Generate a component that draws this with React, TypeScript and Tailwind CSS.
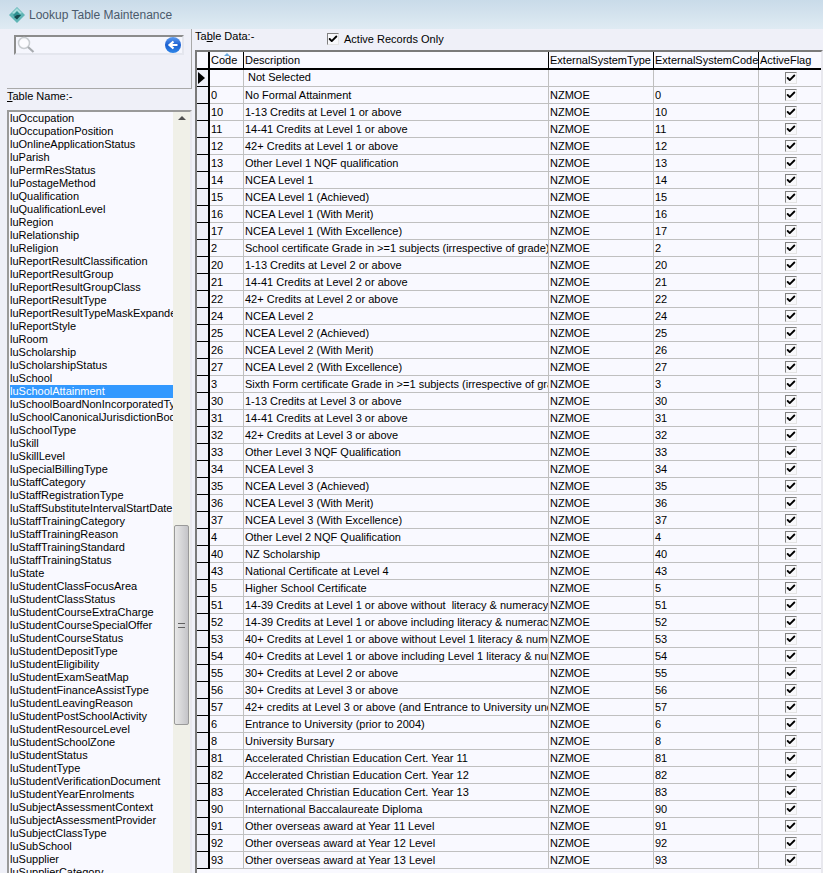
import { Check } from 'lucide-react';

const tableNames = [
  'luOccupation', 'luOccupationPosition', 'luOnlineApplicationStatus', 'luParish', 'luPermResStatus',
  'luPostageMethod', 'luQualification', 'luQualificationLevel', 'luRegion', 'luRelationship', 'luReligion',
  'luReportResultClassification', 'luReportResultGroup', 'luReportResultGroupClass', 'luReportResultType',
  'luReportResultTypeMaskExpanded', 'luReportStyle', 'luRoom', 'luScholarship', 'luScholarshipStatus', 'luSchool',
  'luSchoolAttainment', 'luSchoolBoardNonIncorporatedType', 'luSchoolCanonicalJurisdictionBody', 'luSchoolType',
  'luSkill', 'luSkillLevel', 'luSpecialBillingType', 'luStaffCategory', 'luStaffRegistrationType',
  'luStaffSubstituteIntervalStartDate', 'luStaffTrainingCategory', 'luStaffTrainingReason', 'luStaffTrainingStandard',
  'luStaffTrainingStatus', 'luState', 'luStudentClassFocusArea', 'luStudentClassStatus', 'luStudentCourseExtraCharge',
  'luStudentCourseSpecialOffer', 'luStudentCourseStatus', 'luStudentDepositType', 'luStudentEligibility',
  'luStudentExamSeatMap', 'luStudentFinanceAssistType', 'luStudentLeavingReason', 'luStudentPostSchoolActivity',
  'luStudentResourceLevel', 'luStudentSchoolZone', 'luStudentStatus', 'luStudentType', 'luStudentVerificationDocument',
  'luStudentYearEnrolments', 'luSubjectAssessmentContext', 'luSubjectAssessmentProvider', 'luSubjectClassType',
  'luSubSchool', 'luSupplier', 'luSupplierCategory',
];

const rows: [string, string][] = [
  ['0', 'No Formal Attainment'],
  ['10', '1-13 Credits at Level 1 or above'],
  ['11', '14-41 Credits at Level 1 or above'],
  ['12', '42+ Credits at Level 1 or above'],
  ['13', 'Other Level 1 NQF qualification'],
  ['14', 'NCEA Level 1'],
  ['15', 'NCEA Level 1 (Achieved)'],
  ['16', 'NCEA Level 1 (With Merit)'],
  ['17', 'NCEA Level 1 (With Excellence)'],
  ['2', 'School certificate Grade in >=1 subjects (irrespective of grade)'],
  ['20', '1-13 Credits at Level 2 or above'],
  ['21', '14-41 Credits at Level 2 or above'],
  ['22', '42+ Credits at Level 2 or above'],
  ['24', 'NCEA Level 2'],
  ['25', 'NCEA Level 2 (Achieved)'],
  ['26', 'NCEA Level 2 (With Merit)'],
  ['27', 'NCEA Level 2 (With Excellence)'],
  ['3', 'Sixth Form certificate Grade in >=1 subjects (irrespective of grade)'],
  ['30', '1-13 Credits at Level 3 or above'],
  ['31', '14-41 Credits at Level 3 or above'],
  ['32', '42+ Credits at Level 3 or above'],
  ['33', 'Other Level 3 NQF Qualification'],
  ['34', 'NCEA Level 3'],
  ['35', 'NCEA Level 3 (Achieved)'],
  ['36', 'NCEA Level 3 (With Merit)'],
  ['37', 'NCEA Level 3 (With Excellence)'],
  ['4', 'Other Level 2 NQF Qualification'],
  ['40', 'NZ Scholarship'],
  ['43', 'National Certificate at Level 4'],
  ['5', 'Higher School Certificate'],
  ['51', '14-39 Credits at Level 1 or above without  literacy & numeracy'],
  ['52', '14-39 Credits at Level 1 or above including literacy & numeracy'],
  ['53', '40+ Credits at Level 1 or above without Level 1 literacy & numeracy'],
  ['54', '40+ Credits at Level 1 or above including Level 1 literacy & numeracy'],
  ['55', '30+ Credits at Level 2 or above'],
  ['56', '30+ Credits at Level 3 or above'],
  ['57', '42+ credits at Level 3 or above (and Entrance to University under'],
  ['6', 'Entrance to University (prior to 2004)'],
  ['8', 'University Bursary'],
  ['81', 'Accelerated Christian Education Cert. Year 11'],
  ['82', 'Accelerated Christian Education Cert. Year 12'],
  ['83', 'Accelerated Christian Education Cert. Year 13'],
  ['90', 'International Baccalaureate Diploma'],
  ['91', 'Other overseas award at Year 11 Level'],
  ['92', 'Other overseas award at Year 12 Level'],
  ['93', 'Other overseas award at Year 13 Level'],
];

function CheckBox() {
  return (
    <div className="w-[12px] h-[12px] flex items-center justify-center border border-[#808080] border-r-[#e4e4e4] border-b-[#e4e4e4] bg-[#f8f8fb]">
      <Check size={10} strokeWidth={4.5} className="text-black" />
    </div>
  );
}

function Row({ code, desc, system, sysCode, current }: { code: string; desc: string; system: string; sysCode: string; current?: boolean }) {
  return (
    <div className="flex h-[17px] shrink-0">
      <div className="w-[13px] shrink-0 flex items-center border-r-2 border-b border-r-black border-b-black bg-[#eff0f8]">
        {current && <div className="ml-[1px] w-0 h-0 border-y-[6px] border-y-transparent border-l-[7px] border-l-black" />}
      </div>
      <div className="w-[34px] shrink-0 pl-[1px] border-r border-b border-[#c0c0c0] leading-[17px]">{code}</div>
      <div className={`w-[305px] shrink-0 overflow-hidden whitespace-pre border-r border-b border-[#c0c0c0] ${current ? 'pl-[4px] leading-[15px]' : 'pl-[1px] leading-[17px]'}`}>{desc}</div>
      <div className="w-[105px] shrink-0 pl-[1px] border-r border-b border-[#c0c0c0] leading-[17px]">{system}</div>
      <div className="w-[105px] shrink-0 pl-[1px] border-r border-b border-[#c0c0c0] leading-[17px]">{sysCode}</div>
      <div className="w-[65px] shrink-0 flex items-center justify-center border-r border-b border-[#c0c0c0]">
        <CheckBox />
      </div>
    </div>
  );
}

export default function App() {
  return (
    <div className="h-[873px] w-[823px] overflow-hidden flex flex-col bg-[#eff0f8] text-[11px] text-black font-['Liberation_Sans',sans-serif]">
      {/* Title bar */}
      <div className="h-[29px] shrink-0 flex items-center pl-[9px] gap-[4px] bg-gradient-to-b from-[#c9dbe9] to-[#dfebf3]">
        <svg width="16" height="16" viewBox="0 0 16 16">
          <path d="M8 0 L16 8 L8 16 L0 8 Z" fill="#5fb5b5" />
          <path d="M8 1 L13 6 L8 8 L3 6 Z" fill="#a8dcdc" />
          <path d="M8 4 L12 8 L8 12 L4 8 Z" fill="#2f8f90" />
          <path d="M8 8 L12 8 L8 12.5 L5 10 Z" fill="#15474d" />
        </svg>
        <span className="text-[12px] text-[#4b5a6b]">Lookup Table Maintenance</span>
      </div>

      <div className="flex-1 flex min-h-0">
        {/* Left panel */}
        <div className="w-[192px] shrink-0 pl-[7px] flex flex-col">
          <div className="h-[60px] shrink-0 border-r border-b border-[#a9a9a9] pl-[7px] pr-[7px] pt-[6px]">
            <div className="h-[20px] flex items-center justify-between border-2 border-[#8c8c8c] border-r-[#e4e6ee] border-b-[#e4e6ee] bg-[#f5f6fd] pr-[1px]">
              <svg width="18" height="18" viewBox="0 0 18 18" className="ml-[1px]" fill="none">
                <circle cx="7" cy="7" r="5.5" stroke="#c8ccd0" strokeWidth="1.5" fill="#fbfbfe" />
                <path d="M11 11 L16.5 16" stroke="#a8acb0" strokeWidth="2.2" />
              </svg>
              <div className="w-[16px] h-[16px] rounded-full bg-gradient-to-b from-[#5d9cf0] via-[#1a5fd0] to-[#2f86e8] flex items-center justify-center">
                <svg width="12" height="12" viewBox="0 0 12 12" fill="none">
                  <path d="M10.5 6 H3 M6.5 2.5 L2.5 6 L6.5 9.5" stroke="white" strokeWidth="2.2" />
                </svg>
              </div>
            </div>
          </div>
          <div className="h-[21px] shrink-0 leading-[14px]">
            <span><span className="underline">T</span>able Name:-</span>
          </div>
          <div className="flex-1 min-h-0 flex border-2 border-[#9a9a9a] border-r-[#e8e8ee] border-b-0 bg-[#f9f9ff] overflow-hidden">
            <div className="flex-1 min-w-0 pl-[1px]">
              {tableNames.map((name) => (
                <div
                  key={name}
                  className={`h-[13px] leading-[13px] whitespace-nowrap overflow-hidden ${name === 'luSchoolAttainment' ? 'bg-[#3399ff] text-white' : ''}`}
                >
                  {name}
                </div>
              ))}
            </div>
            {/* Scrollbar */}
            <div className="w-[17px] shrink-0 bg-[#f0f0e8] relative">
              <div className="absolute top-[4px] left-[5px] w-0 h-0 border-x-[4px] border-x-transparent border-b-[4px] border-b-[#505050]" />
              <div className="absolute top-[413px] left-[1px] w-[15px] h-[200px] rounded-[2px] border border-[#9a9a9a] bg-gradient-to-r from-[#e8e8e8] to-[#c4c4c8] flex items-center justify-center">
                <div className="w-[7px] h-[5px] border-y border-[#606060]" />
              </div>
            </div>
          </div>
        </div>

        {/* Right panel */}
        <div className="flex-1 min-w-0 pl-[3px] flex flex-col">
          <div className="h-[21px] shrink-0 flex items-start">
            <span className="w-[132px] leading-[14px]">Ta<span className="underline">b</span>le Data:-</span>
            <div className="flex items-center mt-[3px]">
              <CheckBox />
              <span className="ml-[5px] leading-[14px]">Active Records Only</span>
            </div>
          </div>
          <div className="flex-1 min-h-0 flex flex-col border-2 border-[#7a7a7a] border-r-[#e8e8ee] border-b-0 bg-[#f9f9ff] overflow-hidden">
            <div className="flex h-[18px] shrink-0 border-b-2 border-black leading-[16px]">
              <div className="w-[13px] shrink-0 border-r-2 border-black" />
              <div className="w-[34px] shrink-0 pl-[1px] border-r border-black relative">
                Code
                <div className="absolute top-[1px] left-[14px] w-0 h-0 border-x-[3px] border-x-transparent border-b-[3px] border-b-[#6aa8e0]" />
              </div>
              <div className="w-[305px] shrink-0 pl-[1px] border-r border-black">Description</div>
              <div className="w-[105px] shrink-0 pl-[1px] border-r border-black">ExternalSystemType</div>
              <div className="w-[105px] shrink-0 pl-[1px] border-r border-black">ExternalSystemCode</div>
              <div className="w-[65px] shrink-0 pl-[1px]">ActiveFlag</div>
            </div>
            <Row code="" desc="Not Selected" system="" sysCode="" current />
            {rows.map(([code, desc]) => (
              <Row key={code} code={code} desc={desc} system="NZMOE" sysCode={code} />
            ))}
          </div>
        </div>
      </div>
    </div>
  );
}
